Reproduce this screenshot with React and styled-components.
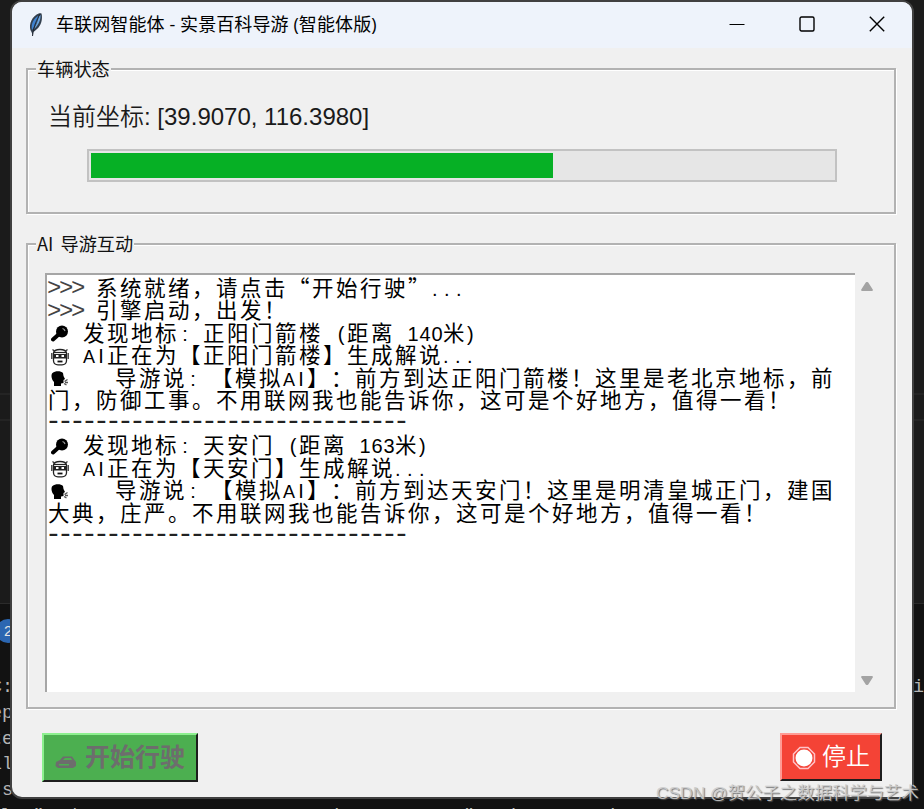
import React from 'react';
import styled, { createGlobalStyle } from "styled-components";

const GlobalStyle = createGlobalStyle`
  * {
    box-sizing: border-box;
  }
  body {
    margin: 0;
    overflow: hidden;
    background-color: #121212;
    font-family: "Liberation Sans", "Noto Sans CJK SC", sans-serif;
  }
`;

const Desktop = styled.div`
  position: relative;
  width: 924px;
  height: 809px;
  overflow: hidden;
  display: flex;
  flex-direction: column;
  background-color: #121212;
`;

const Editor = styled.div`
  height: 604px;
  flex-shrink: 0;
  background-color: #1b1b1b;
  border-bottom: 1px solid #2b2b2b;
  padding-top: 393px;
`;

const ActiveLine = styled.div`
  height: 28px;
  border-top: 2px solid #242424;
  border-bottom: 2px solid #242424;
`;

const PanelBadge = styled.div`
  width: 24px;
  height: 24px;
  margin: 15px 0 0 -4px;
  border-radius: 50%;
  background-color: #2b66b1;
  color: #e4e4e4;
  font-size: 15px;
  line-height: 24px;
  padding-left: 8px;
`;

const Terminal = styled.div`
  margin-top: 32px;
  font-family: "Liberation Mono", monospace;
  font-size: 18.4px;
  color: #b4b4b4;
`;

const TerminalLine = styled.div`
  display: flex;
  justify-content: space-between;
  height: 25.8px;
  line-height: 25.8px;
  margin-left: ${props => props.$shift || 0}px;
  white-space: pre;
`;

const Window = styled.div`
  position: absolute;
  left: 10px;
  top: 0;
  width: 904px;
  height: 799px;
  border: 2px solid #404040;
  border-radius: 12px;
  overflow: hidden;
  background-color: #f0f0f0;
`;

const TitleBar = styled.div`
  height: 46px;
  display: flex;
  align-items: center;
  padding-left: 15px;
  background-color: #eef3fb;
`;

const Title = styled.span`
  flex: 1;
  margin-left: 11px;
  padding-bottom: 3px;
  font-family: "Open Sans", "Noto Sans CJK SC", sans-serif;
  font-size: 18px;
  letter-spacing: 0.1px;
  line-height: 24px;
  color: #000;
  white-space: pre;
`;

const TitleButtons = styled.div`
  display: flex;
  align-items: center;
  height: 100%;
  padding-bottom: 3px;
`;

const TitleButton = styled.button`
  width: 70px;
  height: 40px;
  padding: 0;
  border: none;
  background-color: transparent;
  display: flex;
  align-items: center;
  justify-content: center;
`;

const Group = styled.fieldset`
  width: 870px;
  height: ${props => props.$height}px;
  margin: ${props => props.$top}px 0 0 14px;
  padding: 0;
  border: 2px solid #b2b2b2;
  box-shadow: 1px 1px 0 #fff, inset 1px 1px 0 #fff;
`;

const Legend = styled.legend`
  height: 22px;
  margin-left: 8px;
  padding: 0 1px;
  font-family: "Noto Sans CJK SC", sans-serif;
  font-size: 18.2px;
  line-height: 20px;
  word-spacing: 3px;
  color: #111;
  background-color: #f0f0f0;
  white-space: pre;
`;

const Coordinates = styled.div`
  margin: 19px 0 0 20px;
  font-size: 24px;
  line-height: 36px;
  color: #1a1a1a;
  white-space: pre;
`;

const ThinLabel = styled.span`
  font-weight: 350;
`;

const Progress = styled.div`
  width: 750px;
  height: 33px;
  margin: 14px 0 0 59px;
  padding: 2px;
  border: 2px solid #c2c2c2;
  background-color: #e6e6e6;
`;

const ProgressFill = styled.div`
  height: 25px;
  background-color: #06b025;
`;

const LogArea = styled.div`
  display: flex;
  margin: 18px 0 0 17px;
`;

const LogBox = styled.div`
  width: 810px;
  height: 419px;
  padding: 0.5px 0 0 1px;
  border-top: 2px solid #a6a6a6;
  border-left: 2px solid #a6a6a6;
  background-color: #fff;
`;

const LogLine = styled.div`
  display: flex;
  align-items: center;
  height: 22.5px;
  font-family: "Noto Sans CJK SC", sans-serif;
  font-size: 21.5px;
  line-height: 22.5px;
  color: #000;
  white-space: pre;
  text-spacing-trim: space-all;
  font-feature-settings: "chws" 0, "halt" 0;
`;

const Wide = styled.span`
  letter-spacing: 2.5px;
`;

const Half = styled.span`
  display: inline-block;
  width: 12px;
  font-family: "Liberation Sans", sans-serif;
  font-size: ${props => props.$size || 20}px;
  line-height: 0;
  text-align: ${props => props.$align || "center"};
`;

const Prompt = styled.span`
  width: 48px;
  font-family: "Liberation Mono", monospace;
  font-size: 24px;
  letter-spacing: -2.4px;
  margin-left: -1px;
  margin-right: 1px;
  padding-top: 5px;
  color: #444;
`;

const Divider = styled.span`
  font-family: "Liberation Mono", monospace;
  font-size: 28px;
  letter-spacing: -4.8px;
  margin-left: -3px;
  padding-top: 1px;
  color: #222;
`;

const Emoji = styled.svg`
  width: 18px;
  height: 18px;
  margin: 5px ${props => props.$gap}px 0 3px;
  flex-shrink: 0;
`;

const ScrollBar = styled.div`
  width: 24px;
  height: 419px;
  display: flex;
  flex-direction: column;
  align-items: center;
  justify-content: space-between;
  padding: 8px 0 6px;
`;

const Actions = styled.div`
  display: flex;
  justify-content: space-between;
  align-items: flex-start;
  padding: 24px 30px 0;
`;

const ActionButton = styled.button`
  width: ${props => props.$width}px;
  height: ${props => props.$height}px;
  display: flex;
  align-items: center;
  padding: 0 0 5px ${props => props.$pad}px;
  border: 2px solid;
  border-color: ${props => props.$light} #1d1d1d #1d1d1d ${props => props.$light};
  background-color: ${props => props.$bg};
  color: ${props => props.$color};
  font-family: "Noto Sans CJK SC", sans-serif;
  font-size: ${props => props.$size}px;
  font-weight: ${props => props.$weight};
  line-height: 30px;
  white-space: pre;
`;

const ButtonIcon = styled.svg`
  margin-top: ${props => props.$top}px;
  margin-right: ${props => props.$gap}px;
`;

const Watermark = styled.div`
  position: absolute;
  right: 5px;
  top: 780px;
  font-family: "Liberation Sans", "Noto Sans CJK SC", sans-serif;
  font-size: 17.4px;
  line-height: 26px;
  color: rgba(205, 205, 205, 0.9);
  text-shadow: 1px 1px 1px rgba(90, 90, 90, 0.8);
  white-space: pre;
`;

const Feather = () => (
  <svg width="18" height="26" viewBox="0 0 18 26">
    <path d="M6 24 L4.500 20 C1 15 4 6 9 3 C11 1.500 13 .8 14.500 1.500 C16 7 14 14 10 17 C8 19 6.500 20 6 20 Z" fill="#33404f" />
    <path d="M5 18 C3.500 12 7 6 11 4 C11 8 8 14 5 18 Z" fill="#3f82cf" />
    <path d="M7 17 C11 14 14 8 13.500 3 L12 4 C11 9 9 13 7 17 Z" fill="#6aa4dd" />
    <path d="M13 2 C10 8 7 12 5.500 24" stroke="#20262f" strokeWidth="1" fill="none" />
  </svg>
);

const Magnifier = () => (
  <Emoji viewBox="0 0 18 18" $gap={14}>
    <circle cx="11" cy="6.500" r="6" fill="#000" />
    <path d="M7 10 L2 14.500" stroke="#000" strokeWidth="4" strokeLinecap="round" />
    <path d="M11.500 3.500 A3.500 3.500 0 0 1 14 6" stroke="#999" strokeWidth="1.200" fill="none" />
  </Emoji>
);

const Robot = () => (
  <Emoji viewBox="0 0 18 18" $gap={14}>
    <path d="M2.500 5 Q3 1.500 9 1.500 T15.500 5 V13 Q15 16.800 11 16.800 H7 Q3 16.800 2.500 13 Z" fill="#fff" stroke="#222" strokeWidth="1.300" />
    <path d="M.8 5 V11 M17.200 5 V11 M1.500 1.500 L4 3.500 M16.500 1.500 L14 3.500" stroke="#333" strokeWidth="1.300" />
    <path d="M2.500 4.500 H15.500" stroke="#222" strokeWidth="1.200" />
    <rect x="3" y="6" width="12" height="4.500" fill="#222" />
    <rect x="5" y="7" width="2.500" height="2" fill="#fff" />
    <rect x="10.500" y="7" width="2.500" height="2" fill="#fff" />
    <path d="M6.500 13.500 H11.500" stroke="#111" strokeWidth="1.800" />
  </Emoji>
);

const Speaker = () => (
  <Emoji viewBox="0 0 18 18" $gap={46}>
    <path d="M3 16 V12 C0 9 0 4 1.500 3 C4 .5 10 .5 12 3 L12.500 6 L14 9 L12.500 10 V13 L10 13.500 V16 Z" fill="#000" />
    <path d="M13.500 11.500 L16.500 9.500 M14 12.500 H17 M13 13.500 L15.500 15" stroke="#555" strokeWidth="1.300" />
  </Emoji>
);

const Arrow = ({ down }) => (
  <svg width="14" height="11" viewBox="0 0 14 11">
    <path
      d={down ? "M2 2 H12 L7.500 9 H6.500 Z" : "M2 9 H12 L7.500 2 H6.500 Z"}
      fill="#a3a3a3"
      stroke="#a3a3a3"
      strokeWidth="1.800"
      strokeLinejoin="round"
    />
  </svg>
);

// half-width characters sit in a 12px cell, the others in a 24px one
const Mono = ({ children }) => {
  const runs = children.match(/[\x20-\x7e]|[^\x20-\x7e]+/g);
  return (
    <span>
      {runs.map((run, i) => {
        if (!/^[\x20-\x7e]$/.test(run)) return <Wide key={i}>{run}</Wide>;
        return (
          <Half key={i} $size={run === "A" ? 18 : 20} $align={".)".includes(run) ? "left" : "center"}>
            {run}
          </Half>
        );
      })}
    </span>
  );
};

const paradas = [
  {
    nome: "正阳门箭楼",
    distancia: 140,
    fala: "前方到达正阳门箭楼！这里是老北京地标，前",
    resto: "门，防御工事。不用联网我也能告诉你，这可是个好地方，值得一看！",
  },
  {
    nome: "天安门",
    distancia: 163,
    fala: "前方到达天安门！这里是明清皇城正门，建国",
    resto: "大典，庄严。不用联网我也能告诉你，这可是个好地方，值得一看！",
  },
];

const Parada = ({ parada }) => (
  <>
    <LogLine>
      <Magnifier />
      <Mono>{`发现地标: ${parada.nome} (距离 ${parada.distancia}米)`}</Mono>
    </LogLine>
    <LogLine>
      <Robot />
      <Mono>{`AI正在为【${parada.nome}】生成解说...`}</Mono>
    </LogLine>
    <LogLine>
      <Speaker />
      <Mono>{`导游说: 【模拟AI】：${parada.fala}`}</Mono>
    </LogLine>
    <LogLine>
      <Mono>{parada.resto}</Mono>
    </LogLine>
    <LogLine>
      <Divider>{"-".repeat(30)}</Divider>
    </LogLine>
  </>
);

export default function App() {
  const progresso = 462 / 742;

  return (
    <Desktop>
      <GlobalStyle />
      <Editor>
        <ActiveLine />
      </Editor>
      <PanelBadge>2</PanelBadge>
      <Terminal>
        <TerminalLine $shift={-9}><span>C:</span><span>hi</span></TerminalLine>
        <TerminalLine $shift={-9}>ep</TerminalLine>
        <TerminalLine $shift={-9}>te</TerminalLine>
        <TerminalLine $shift={-9}>ll</TerminalLine>
        <TerminalLine $shift={2}>s       ()</TerminalLine>
        <TerminalLine>{'la "aad aaaaaaaaaa taaaaaa t tit taaat    "a ti        i'}</TerminalLine>
      </Terminal>

      <Window>
        <TitleBar>
          <Feather />
          <Title>车联网智能体 - 实景百科导游 (智能体版)</Title>
          <TitleButtons>
            <TitleButton>
              <svg width="16" height="16" viewBox="0 0 16 16">
                <path d="M.5 8.500 H15.500" stroke="#000" strokeWidth="1" />
              </svg>
            </TitleButton>
            <TitleButton>
              <svg width="16" height="16" viewBox="0 0 16 16">
                <rect x="1" y="1" width="14" height="14" rx="1.500" fill="none" stroke="#000" strokeWidth="1.400" />
              </svg>
            </TitleButton>
            <TitleButton>
              <svg width="16" height="16" viewBox="0 0 16 16">
                <path d="M.8 .8 L15.200 15.200 M15.200 .8 L.8 15.200" stroke="#000" strokeWidth="1.400" />
              </svg>
            </TitleButton>
          </TitleButtons>
        </TitleBar>

        <Group $height={156} $top={10}>
          <Legend>车辆状态</Legend>
          <Coordinates><ThinLabel>当前坐标: </ThinLabel>[39.9070, 116.3980]</Coordinates>
          <Progress>
            <ProgressFill style={{ width: `${progresso * 100}%` }} />
          </Progress>
        </Group>

        <Group $height={476} $top={19}>
          <Legend>AI 导游互动</Legend>
          <LogArea>
            <LogBox>
              <LogLine><Prompt>{">>> "}</Prompt><Mono>系统就绪，请点击“开始行驶”...</Mono></LogLine>
              <LogLine><Prompt>{">>> "}</Prompt><Mono>引擎启动，出发！</Mono></LogLine>
              {paradas.map((parada) => (
                <Parada key={parada.nome} parada={parada} />
              ))}
            </LogBox>
            <ScrollBar>
              <Arrow />
              <Arrow down />
            </ScrollBar>
          </LogArea>
        </Group>

        <Actions>
          <ActionButton $width={156} $height={49} $pad={10} $bg="#4caf50" $light="#8df08f" $color="#6d6d6d" $size={25} $weight={700}>
            <ButtonIcon width="24" height="16" viewBox="0 0 24 16" $top={13} $gap={7}>
              <path d="M2 8 L6 6 L9 2.500 H18 L20.500 6 L22 8 V12 L19 14 H4 L1.500 12 Z" fill="#6d6d6d" />
              <path d="M9 6 L11 4 H17 L18 6 Z M5 10 H15 V11.500 H5 Z" fill="#4caf50" />
            </ButtonIcon>
            开始行驶
          </ActionButton>
          <ActionButton $width={102} $height={48} $pad={10} $bg="#f44336" $light="#ff9b94" $color="#fff" $size={24} $weight={350}>
            <ButtonIcon width="24" height="24" viewBox="0 0 24 24" $top={7} $gap={6}>
              <path d="M8 1.500 H16 L22.500 8 V16 L16 22.500 H8 L1.500 16 V8 Z" fill="none" stroke="#ffc4c9" strokeWidth="1.500" />
              <circle cx="12" cy="12" r="8.500" fill="#fff" />
            </ButtonIcon>
            停止
          </ActionButton>
        </Actions>
      </Window>

      <Watermark>CSDN @贺公子之数据科学与艺术</Watermark>
    </Desktop>
  );
}
